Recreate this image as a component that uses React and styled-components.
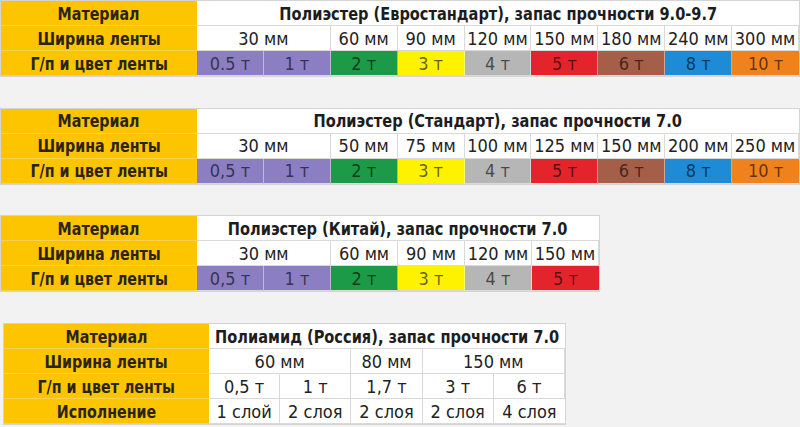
import React from 'react';
import styled, { createGlobalStyle } from 'styled-components';

const GlobalStyle = createGlobalStyle`
  html, body {
    margin: 0;
    padding: 0;
    background: #f2f2f2;
  }
  body {
    font-family: "Liberation Sans Narrow", "DejaVu Sans Condensed", "Roboto Condensed", sans-serif;
  }
`;

const Page = styled.div`
  display: flex;
  flex-direction: column;
  align-items: flex-start;
  gap: 30.7px;
  width: 800px;
  height: 427px;
  overflow: hidden;
`;

const Table = styled.div`
  display: grid;
  grid-template-columns: ${p => p.$label}px repeat(${p => p.$cols}, 1fr);
  grid-auto-rows: 25px;
  width: ${p => p.$width}px;
  margin-left: ${p => p.$offset || 0}px;
  border: 1px solid #d4d4d4;
  box-sizing: border-box;
  background: #fff;
`;

const Bold = styled.span`
  display: inline-block;
  font-weight: bold;
  font-size: 18px;
  transform: scaleX(${p => p.$squeeze || 0.88});
`;

const LabelCell = styled.div`
  display: flex;
  align-items: center;
  justify-content: center;
  background: #fdc500;
  border-bottom: 1px solid #f6d255;
  color: #2b2414;
  white-space: nowrap;
  box-sizing: border-box;
`;

const TitleCell = styled.div`
  grid-column: span ${p => p.$span};
  display: flex;
  align-items: center;
  justify-content: center;
  border-bottom: 1px solid #d9d9d9;
  color: #1d1d1d;
  white-space: nowrap;
  box-sizing: border-box;
`;

const ValueCell = styled.div`
  grid-column: span ${p => p.$span || 1};
  display: flex;
  align-items: center;
  justify-content: center;
  background: ${p => p.$bg || '#fff'};
  color: ${p => (p.$bg ? 'rgba(0, 0, 0, 0.62)' : '#222')};
  border-right: 1px solid ${p => (p.$bg ? 'rgba(255, 255, 255, 0.45)' : '#d9d9d9')};
  border-bottom: 1px solid #d9d9d9;
  font-size: 18px;
  white-space: nowrap;
  box-sizing: border-box;

  &:last-child {
    border-right: none;
  }
`;

const C = {
  purple: '#8b7ec2',
  green: '#1d9a47',
  yellow: '#fff200',
  gray: '#b6b6b6',
  red: '#e3252b',
  brown: '#a55e47',
  blue: '#1e8bd7',
  orange: '#f0821e',
};

const loads = (half) => [
  { t: half, bg: C.purple },
  { t: '1 т', bg: C.purple },
  { t: '2 т', bg: C.green },
  { t: '3 т', bg: C.yellow },
  { t: '4 т', bg: C.gray },
  { t: '5 т', bg: C.red },
  { t: '6 т', bg: C.brown },
  { t: '8 т', bg: C.blue },
  { t: '10 т', bg: C.orange },
];

const widths = list => list.map((t, i) => ({ t, span: i === 0 ? 2 : 1 }));

const tables = [
  {
    label: 196,
    cols: 9,
    width: 800,
    title: 'Полиэстер (Евростандарт), запас прочности 9.0-9.7',
    rows: [
      ['Ширина ленты', widths(['30 мм', '60 мм', '90 мм', '120 мм', '150 мм', '180 мм', '240 мм', '300 мм'])],
      ['Г/п и цвет ленты', loads('0.5 т')],
    ],
  },
  {
    label: 196,
    cols: 9,
    width: 800,
    title: 'Полиэстер (Стандарт), запас прочности 7.0',
    rows: [
      ['Ширина ленты', widths(['30 мм', '50 мм', '75 мм', '100 мм', '125 мм', '150 мм', '200 мм', '250 мм'])],
      ['Г/п и цвет ленты', loads('0,5 т')],
    ],
  },
  {
    label: 196,
    cols: 6,
    width: 600,
    title: 'Полиэстер (Китай), запас прочности 7.0',
    rows: [
      ['Ширина ленты', widths(['30 мм', '60 мм', '90 мм', '120 мм', '150 мм'])],
      ['Г/п и цвет ленты', loads('0,5 т').slice(0, 6)],
    ],
  },
  {
    label: 205,
    cols: 5,
    width: 563,
    offset: 3,
    title: 'Полиамид (Россия), запас прочности 7.0',
    rows: [
      ['Ширина ленты', [{ t: '60 мм', span: 2 }, { t: '80 мм' }, { t: '150 мм', span: 2 }]],
      ['Г/п и цвет ленты', ['0,5 т', '1 т', '1,7 т', '3 т', '6 т'].map(t => ({ t }))],
      ['Исполнение', ['1 слой', '2 слоя', '2 слоя', '2 слоя', '4 слоя'].map(t => ({ t }))],
    ],
  },
];

function SlingTable({ data }) {
  return (
    <Table $label={data.label} $cols={data.cols} $width={data.width} $offset={data.offset}>
      <LabelCell>
        <Bold>Материал</Bold>
      </LabelCell>
      <TitleCell $span={data.cols}>
        <Bold $squeeze={0.9}>{data.title}</Bold>
      </TitleCell>
      {data.rows.map(([label, cells]) => (
        <React.Fragment key={label}>
          <LabelCell>
            <Bold>{label}</Bold>
          </LabelCell>
          {cells.map((c, i) => (
            <ValueCell key={i} $span={c.span} $bg={c.bg}>
              {c.t}
            </ValueCell>
          ))}
        </React.Fragment>
      ))}
    </Table>
  );
}

export default function App() {
  return (
    <>
      <GlobalStyle />
      <Page>
        {tables.map(t => (
          <SlingTable key={t.title} data={t} />
        ))}
      </Page>
    </>
  );
}
